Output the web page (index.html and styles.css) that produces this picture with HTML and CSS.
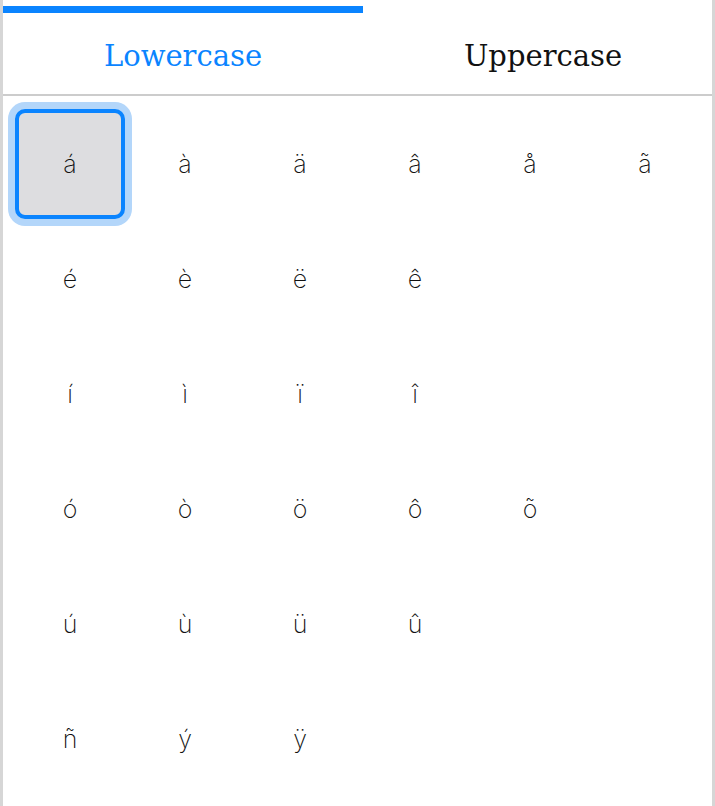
FILE: index.html
```html
<!DOCTYPE html>
<html lang="en">
<head>
<meta charset="utf-8">
<title>Accented characters</title>
<link rel="stylesheet" href="styles.css">
</head>
<body>
<div class="app">
  <div class="tabs">
    <div class="tab tab-active">
      <div class="indicator"></div>
      <div class="tab-label">Lowercase</div>
    </div>
    <div class="tab">
      <div class="indicator indicator-off"></div>
      <div class="tab-label">Uppercase</div>
    </div>
  </div>
  <div class="grid">
    <div class="key key-focus">á</div><div class="key">à</div><div class="key">ä</div><div class="key">â</div><div class="key">å</div><div class="key">ã</div>
    <div class="key">é</div><div class="key">è</div><div class="key">ë</div><div class="key">ê</div><div class="key"></div><div class="key"></div>
    <div class="key">í</div><div class="key">ì</div><div class="key">ï</div><div class="key">î</div><div class="key"></div><div class="key"></div>
    <div class="key">ó</div><div class="key">ò</div><div class="key">ö</div><div class="key">ô</div><div class="key">õ</div><div class="key"></div>
    <div class="key">ú</div><div class="key">ù</div><div class="key">ü</div><div class="key">û</div><div class="key"></div><div class="key"></div>
    <div class="key">ñ</div><div class="key">ý</div><div class="key">ÿ</div><div class="key"></div><div class="key"></div><div class="key"></div>
  </div>
</div>
</body>
</html>
```

FILE: styles.css
```css
html, body {
  margin: 0;
  padding: 0;
  background: #ffffff;
}

.app {
  box-sizing: border-box;
  width: 715px;
  height: 806px;
  border-left: 3px solid #d6d6d6;
  border-right: 3px solid #d6d6d6;
  overflow: hidden;
  background: #ffffff;
}

.tabs {
  display: grid;
  grid-template-columns: 360px 360px;
  width: 720px;
  height: 94px;
  position: relative;
}

.tabs::after {
  content: "";
  position: absolute;
  left: 0;
  right: 0;
  bottom: -2px;
  height: 2px;
  background: #cccccc;
}

.tab {
  display: flex;
  flex-direction: column;
  align-items: center;
  padding-top: 6px;
}

.indicator {
  align-self: stretch;
  height: 7px;
  background: #0a84ff;
}

.indicator-off {
  background: transparent;
}

.tab-label {
  margin-top: 25px;
  font-family: "DejaVu Serif", serif;
  font-size: 29px;
  line-height: 36px;
  color: #111111;
}

.tab-active .tab-label {
  color: #0a84ff;
}

.grid {
  display: grid;
  grid-template-columns: repeat(6, 110px);
  grid-auto-rows: 110px;
  gap: 5px;
  padding: 15px 0 0 12px;
}

.key {
  box-sizing: border-box;
  display: flex;
  align-items: center;
  justify-content: center;
  font-family: "Inter", sans-serif;
  font-weight: 200;
  font-size: 25px;
  color: #111111;
  border-radius: 10px;
}

.key-focus {
  background: #dddde0;
  border: 4px solid #0a84ff;
  box-shadow: 0 0 0 7px #b3d6fa;
}
```
